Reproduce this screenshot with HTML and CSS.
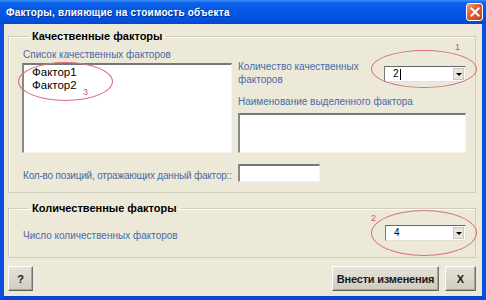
FILE: index.html
```html
<!DOCTYPE html>
<html lang="ru">
<head>
  <meta charset="UTF-8">
  <title>Факторы, влияющие на стоимость объекта</title>
  <link rel="stylesheet" href="styles.css">
</head>
<body>

  <div class="window">
    <!-- Заголовок окна -->
    <div class="titlebar">
      <span class="title">Факторы, влияющие на стоимость объекта</span>
      <span class="close-btn">
        <svg width="10" height="10" viewBox="0 0 10 10"><path d="M1.5 1.5 L8.5 8.5 M8.5 1.5 L1.5 8.5" stroke="#fff" stroke-width="2" stroke-linecap="square"/></svg>
      </span>
    </div>

    <div class="content">
      <!-- Качественные факторы -->
      <fieldset class="group group-quality">
        <legend>Качественные факторы</legend>
        <div class="quality-grid">
          <div class="col-left">
            <div class="label">Список качественных факторов</div>
            <div class="listbox">
              <div class="item">Фактор1</div>
              <div class="item">Фактор2</div>
            </div>
          </div>
          <div class="col-right">
            <div class="count-row">
              <div class="label count-label">Количество качественных факторов</div>
              <div class="combo combo-quality">
                <span class="combo-value">2<span class="caret"></span></span>
                <span class="combo-arrow"></span>
              </div>
            </div>
            <div class="label name-label">Наименование выделенного фактора</div>
            <div class="textbox name-box"></div>
          </div>
        </div>
        <div class="positions-row">
          <div class="label positions-label">Кол-во позиций, отражающих данный фактор::</div>
          <div class="textbox positions-box"></div>
        </div>
      </fieldset>

      <!-- Количественные факторы -->
      <fieldset class="group group-quantity">
        <legend>Количественные факторы</legend>
        <div class="quantity-row">
          <div class="label quantity-label">Число количественных факторов</div>
          <div class="combo combo-quantity">
            <span class="combo-value">4</span>
            <span class="combo-arrow"></span>
          </div>
        </div>
      </fieldset>

      <div class="buttons">
        <button class="btn btn-help">?</button>
        <div class="buttons-right">
          <button class="btn btn-apply">Внести изменения</button>
          <button class="btn btn-close">X</button>
        </div>
      </div>
    </div>

    <!-- Пометки -->
    <div class="mark mark-1"></div>
    <div class="mark mark-2"></div>
    <div class="mark mark-3"></div>
    <span class="mark-num num-1">1</span>
    <span class="mark-num num-2">2</span>
    <span class="mark-num num-3">3</span>
  </div>

</body>
</html>
```

FILE: styles.css
```css
body, html {
  margin: 0;
  padding: 0;
  height: 100%;
  overflow: hidden;
  font-family: 'Liberation Sans', Arial, sans-serif;
  background: #ece9d8;
}

.window {
  position: relative;
  width: 486px;
  height: 300px;
  box-sizing: border-box;
  background: #ece9d8;
  border-left: 4px solid #0b4fe0;
  border-right: 4px solid #0b4fe0;
  border-bottom: 4px solid #0a46d0;
  display: flex;
  flex-direction: column;
}

.titlebar {
  height: 24px;
  margin: 0 -4px;
  padding: 0 3px 0 6px;
  display: flex;
  align-items: center;
  justify-content: space-between;
  background: linear-gradient(#3d8ef8 0, #0c63ea 12%, #0357e4 45%, #0053e0 80%, #0846c8 100%);
}

.title {
  color: #fff;
  font-weight: bold;
  font-size: 10px;
  letter-spacing: 0.2px;
  text-shadow: 1px 1px 0 #0a2f8a;
}

.close-btn {
  width: 17px;
  height: 18px;
  box-sizing: border-box;
  border: 1px solid #fff;
  border-radius: 3px;
  background: linear-gradient(135deg, #f0a080 0, #e0603a 40%, #c8401c 100%);
  display: flex;
  align-items: center;
  justify-content: center;
}

.content {
  flex: 1;
  padding: 5px 6px 0 4px;
  display: flex;
  flex-direction: column;
}

.group {
  margin: 0;
  min-width: 0;
  border: 1px solid #d0ccbc;
  box-shadow: inset 1px 1px 0 #fbfaf6;
}

.group legend {
  font-weight: bold;
  font-size: 11px;
  line-height: 14px;
  color: #000;
  padding: 0 4px;
  margin-left: 6px;
}

.group-quality {
  padding: 5px 9px 10px 13px;
}

.group-quantity {
  margin-top: 8px;
  padding: 10px 9px 15px 13px;
}

.label {
  font-size: 10px;
  line-height: 13px;
  color: #4a69a6;
}

.quality-grid {
  display: grid;
  grid-template-columns: 210px 228px;
  column-gap: 6px;
}

.col-left .label {
  margin-left: 1px;
  margin-bottom: 2px;
}

.listbox {
  height: 90px;
  box-sizing: border-box;
  background: #fff;
  border-top: 2px solid #777;
  border-left: 2px solid #888;
  border-right: 1px solid #f4f3ee;
  border-bottom: 1px solid #f4f3ee;
  padding: 1px 0 0 8px;
}

.item {
  font-size: 11.5px;
  line-height: 12.5px;
  color: #000;
}

.count-row {
  margin-top: 13px;
  display: flex;
  justify-content: space-between;
  align-items: flex-start;
}

.count-label {
  width: 130px;
  line-height: 12.5px;
}

.combo {
  height: 16px;
  box-sizing: border-box;
  background: #fff;
  border-top: 1px solid #666;
  border-left: 1px solid #777;
  border-right: 1px solid #e4e2d8;
  border-bottom: 1px solid #e4e2d8;
  display: flex;
  align-items: center;
  justify-content: space-between;
  padding-right: 1px;
}

.combo-quality {
  width: 82px;
  margin-top: 5px;
}

.combo-quantity {
  width: 81px;
}

.combo-value {
  font-size: 10px;
  line-height: 12px;
  padding-left: 8px;
  color: #000;
  display: flex;
  align-items: center;
}

.caret {
  width: 1px;
  height: 11px;
  margin-left: 1px;
  background: #000;
}

.combo-arrow {
  width: 11px;
  height: 12px;
  box-sizing: border-box;
  background: #e6e4dc;
  border: 1px solid #c9c6ba;
  position: relative;
}

.combo-arrow::after {
  content: '';
  position: absolute;
  left: 2px;
  top: 4px;
  border-left: 3px solid transparent;
  border-right: 3px solid transparent;
  border-top: 3px solid #000;
}

.name-label {
  margin-top: 9px;
}

.textbox {
  box-sizing: border-box;
  background: #fff;
  border-top: 2px solid #777;
  border-left: 2px solid #888;
  border-right: 1px solid #f4f3ee;
  border-bottom: 1px solid #f4f3ee;
}

.name-box {
  height: 40px;
  margin-top: 5px;
  width: 228px;
}

.positions-row {
  margin-top: 11px;
  display: flex;
  align-items: flex-start;
}

.positions-label {
  width: 215px;
  margin-left: 1px;
  margin-top: 5px;
  letter-spacing: -0.2px;
  white-space: nowrap;
}

.positions-box {
  width: 82px;
  height: 18px;
}

.quantity-row {
  display: flex;
  justify-content: space-between;
  align-items: flex-start;
}

.quantity-label {
  margin-left: 1px;
  margin-top: 4px;
}

.buttons {
  margin-top: 8px;
  display: flex;
  justify-content: space-between;
}

.buttons-right {
  display: flex;
  gap: 6px;
}

.btn {
  height: 25px;
  box-sizing: border-box;
  padding: 0;
  font-family: 'Liberation Sans', Arial, sans-serif;
  font-weight: bold;
  font-size: 11px;
  color: #1a1a1a;
  white-space: nowrap;
  background: linear-gradient(#e6e3da, #cfcbbd);
  border-top: 1px solid #fff;
  border-left: 1px solid #fff;
  border-right: 1px solid #707070;
  border-bottom: 1px solid #606060;
  box-shadow: inset -1px -1px 0 #a8a498;
}

.btn-help {
  width: 25px;
}

.btn-apply {
  width: 107px;
  letter-spacing: -0.2px;
}

.btn-close {
  width: 31px;
}

/* красные пометки поверх формы */
.mark {
  position: absolute;
  border: 1px solid #d9707a;
  border-radius: 50%;
}

.mark-1 {
  left: 367px;
  top: 50px;
  width: 104px;
  height: 36px;
}

.mark-2 {
  left: 367px;
  top: 210px;
  width: 104px;
  height: 44px;
}

.mark-3 {
  left: 14px;
  top: 62px;
  width: 93px;
  height: 37px;
}

.mark-num {
  position: absolute;
  font-size: 9px;
  line-height: 10px;
  color: #d05560;
}

.num-1 {
  left: 451px;
  top: 42px;
}

.num-2 {
  left: 367px;
  top: 213px;
}

.num-3 {
  left: 79px;
  top: 87px;
}
```
